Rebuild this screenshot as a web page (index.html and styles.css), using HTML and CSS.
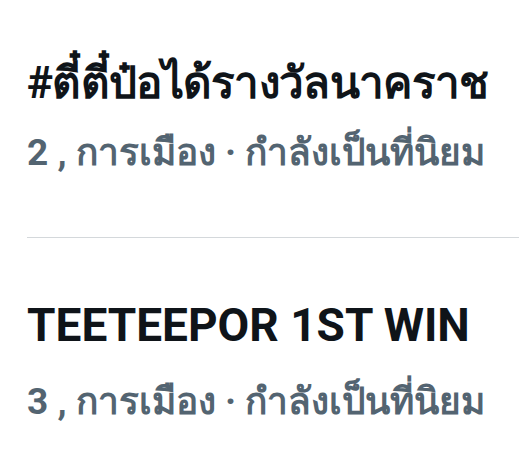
FILE: index.html
```html
<!DOCTYPE html>
<html lang="th">
<head>
    <meta charset="UTF-8">
    <meta name="viewport" content="width=device-width, initial-scale=1.0">
    <title>กำลังเป็นที่นิยม</title>
    <link rel="stylesheet" href="styles.css">
</head>
<body>
    <div class="trends">
        <div class="trend">
            <div class="trend-title trend-title-th">#ตี๋ตี๋ป๋อได้รางวัลนาคราช</div>
            <div class="trend-meta">2 , การเมือง · กำลังเป็นที่นิยม</div>
        </div>
        <div class="trend">
            <div class="trend-title">TEETEEPOR 1ST WIN</div>
            <div class="trend-meta">3 , การเมือง · กำลังเป็นที่นิยม</div>
        </div>
    </div>
</body>
</html>
```

FILE: styles.css
```css
body {
    margin: 0;
    background-color: #ffffff;
    font-family: Roboto, "Noto Sans", sans-serif;
}
.trends {
    padding-left: 27px;
}
.trend {
    padding: 61px 0 62px;
}
.trend:first-child {
    padding-top: 57px;
}
.trend:last-child {
    padding-bottom: 20px;
}
.trend + .trend {
    border-top: 1px solid #d4d8db;
}
.trend-title {
    font-size: 46px;
    font-weight: 700;
    color: #0f1419;
    line-height: 52px;
    white-space: nowrap;
}
.trend-title-th {
    font-size: 44px;
    letter-spacing: -0.7px;
    margin-bottom: -7px;
}
.trend-meta {
    margin-top: 29px;
    font-size: 37px;
    font-weight: 700;
    color: #536471;
    line-height: 44px;
    white-space: nowrap;
}
```
